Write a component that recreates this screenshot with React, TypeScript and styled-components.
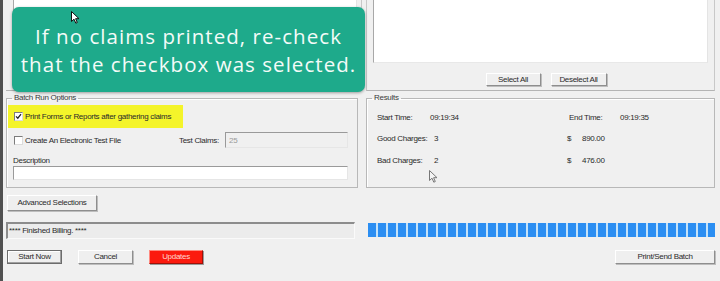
import React from "react";
import styled, { createGlobalStyle } from "styled-components";

const GlobalStyle = createGlobalStyle`
  html, body {
    margin: 0;
    padding: 0;
    background: #f0f0f0;
  }
  body {
    font-family: "Liberation Sans", Arial, sans-serif;
  }
`;

const Window = styled.div`
  position: relative;
  width: 720px;
  height: 281px;
  overflow: hidden;
  box-sizing: border-box;
  background: #f0f0f0;
  border-left: 3px solid #505050;
  padding: 0 5px 0 3px;
  display: grid;
  grid-template-columns: 352px 349px;
  grid-template-rows: 92px 96px 23px 28px auto;
  column-gap: 8px;
  font-family: "Liberation Sans", Arial, sans-serif;
  font-size: 8px;
  letter-spacing: -0.3px;
  color: #2a2a2a;
`;

const Frame = styled.div<{ $left?: boolean }>`
  box-sizing: border-box;
  height: 91px;
  border-bottom: 1px solid #b4b4b4;
  border-left: ${({ $left }) => ($left ? "none" : "1px solid #c8c8c8")};
  border-right: 1px solid #c8c8c8;
  margin-right: ${({ $left }) => ($left ? "-4px" : "0")};
  padding: ${({ $left }) => ($left ? "0 4px 0 7px" : "0 6px")};
  display: flex;
  flex-direction: column;
`;

const List = styled.div`
  height: 63px;
  background: #fff;
  border-left: 1px solid #a8a8a8;
  border-right: 1px solid #e4e4e4;
  border-bottom: 1px solid #e8e8e8;
  box-sizing: border-box;
`;

const ListButtons = styled.div`
  display: flex;
  justify-content: center;
  gap: 10px;
  padding-left: 11px;
  margin-top: 10px;
`;

const Button = styled.button<{ $w: number; $h?: number; $kind?: "default" | "danger" }>`
  box-sizing: border-box;
  width: ${({ $w }) => $w}px;
  height: ${({ $h }) => $h ?? 14}px;
  padding: 0;
  font-family: inherit;
  font-size: 8px;
  letter-spacing: -0.3px;
  line-height: 1;
  color: ${({ $kind }) => ($kind === "danger" ? "#ffd6d0" : "#2a2a2a")};
  background: ${({ $kind }) => ($kind === "danger" ? "#fb1a0e" : "#efefef")};
  border: 1px solid;
  border-color: ${({ $kind }) =>
    $kind === "default"
      ? "#6c6c6c"
      : $kind === "danger"
      ? "#ff8a80 #a01008 #a01008 #ff8a80"
      : "#ffffff #8e8e8e #8e8e8e #ffffff"};
  box-shadow: ${({ $kind }) =>
    $kind === "default"
      ? "inset -1px -1px 0 #a0a0a0, inset 1px 1px 0 #fff"
      : $kind === "danger"
      ? "1px 1px 0 #9a9a9a"
      : "1px 1px 0 #bdbdbd"};
  cursor: default;
`;

const GroupBox = styled.fieldset`
  box-sizing: border-box;
  margin: 1px 0 0;
  height: 95px;
  padding: 0;
  border: 1px solid #b8b8b8;
  box-shadow: inset 1px 1px 0 #fff;
  min-width: 0;
`;

const Legend = styled.legend`
  margin-left: 5px;
  padding: 0 2px;
  line-height: 10px;
  font-size: 8px;
  color: #3a3a3a;
`;

const Highlight = styled.div`
  margin: 2px 0 0 1px;
  width: 175px;
  height: 23px;
  background: #f4f42a;
  display: flex;
  align-items: center;
  padding-left: 6px;
  box-sizing: border-box;
  gap: 2px;
`;

const Box = styled.span`
  box-sizing: border-box;
  width: 9px;
  height: 9px;
  background: #fff;
  border: 1px solid;
  border-color: #7c7c7c #dcdcdc #dcdcdc #7c7c7c;
  display: inline-flex;
  align-items: center;
  justify-content: center;
  flex: none;
`;

const OptionRow = styled.div`
  display: grid;
  grid-template-columns: 165px 46px 123px;
  align-items: center;
  margin-top: 4px;
  height: 16px;
  padding-left: 7px;
`;

const CheckLabel = styled.label`
  display: flex;
  align-items: center;
  gap: 2px;
`;

const Field = styled.div<{ $disabled?: boolean }>`
  box-sizing: border-box;
  height: ${({ $disabled }) => ($disabled ? 16 : 14)}px;
  background: ${({ $disabled }) => ($disabled ? "#f0f0f0" : "#fff")};
  border: 1px solid;
  border-color: #9a9a9a #e6e6e6 #e6e6e6 #9a9a9a;
  color: #9a9a9a;
  padding: 3px 3px 0;
  font-size: 8px;
`;

const Caption = styled.div`
  margin: 8px 0 0 6px;
  line-height: 10px;
`;

const DescField = styled(Field)`
  margin-left: 6px;
  width: 335px;
`;

const Results = styled.div`
  display: grid;
  grid-template-rows: repeat(3, 12px);
  row-gap: 9.5px;
  margin-top: 8px;
  padding-left: 10px;
`;

const ResultRow = styled.div`
  display: flex;
  align-items: center;
`;

const Cell = styled.span<{ $w: number }>`
  width: ${({ $w }) => $w}px;
  flex: none;
`;

const Cell2 = styled.span`
  flex: none;
`;

const BottomLeft = styled.div`
  display: flex;
  align-items: flex-start;
  gap: 16px;
  padding-left: 1px;
  margin-top: 11px;
`;

const BottomRight = styled.div`
  display: flex;
  justify-content: flex-end;
  margin-top: 11px;
`;

const AdvRow = styled.div`
  align-self: end;
  padding-left: 1px;
`;

const Status = styled.div`
  align-self: end;
  box-sizing: border-box;
  width: 349px;
  height: 17px;
  background: #ececec;
  border-top: 2px solid #8c8c8c;
  border-left: 2px solid #8c8c8c;
  border-right: 1px solid #fafafa;
  border-bottom: 1px solid #fafafa;
  padding: 2px 0 0 1px;
  line-height: 10px;
`;

const Progress = styled.div`
  align-self: end;
  margin: 0 0 2px 2px;
  width: 347px;
  height: 14px;
  background: #c4e3fa;
  display: flex;
  gap: 2px;
  overflow: hidden;
`;

const Segment = styled.span`
  width: 8px;
  flex: none;
  background: #2b8ef2;
`;

const Callout = styled.div`
  position: absolute;
  left: 9px;
  top: 7px;
  width: 353px;
  height: 85px;
  box-sizing: border-box;
  border-radius: 7px;
  background: #1eaa8b;
  box-shadow: 0 1px 3px rgba(0, 0, 0, 0.35);
  color: #f4fbf8;
  display: flex;
  flex-direction: column;
  justify-content: center;
`;

const CalloutText = styled.p`
  margin: 0;
  font-family: "Open Sans", "Liberation Sans", sans-serif;
  font-weight: 500;
  font-size: 20.5px;
  line-height: 28px;
  letter-spacing: 1.05px;
  text-align: center;
`;

const Pointer = styled.svg<{ $x: number; $y: number }>`
  position: absolute;
  left: ${({ $x }) => $x}px;
  top: ${({ $y }) => $y}px;
`;

const Tick = () => (
  <svg width="7" height="7" viewBox="0 0 7 7">
    <path d="M1 3.4 L2.8 5.2 L6 1.2" fill="none" stroke="#222" strokeWidth="1.3" />
  </svg>
);

const Arrow = ({ x, y, hollow }: { x: number; y: number; hollow?: boolean }) => (
  <Pointer $x={x} $y={y} width="9" height="13" viewBox="0 0 9 13">
    <path
      d="M0.5 0.5 L0.5 10.5 L3 8.2 L4.8 12.2 L6.3 11.5 L4.6 7.7 L8 7.7 Z"
      fill={hollow ? "#f4f4f4" : "#fff"}
      stroke={hollow ? "#777" : "#111"}
      strokeWidth="1"
      strokeLinejoin="round"
    />
  </Pointer>
);

export default function App() {
  const segments = Array.from({ length: 35 });
  return (
    <>
      <GlobalStyle />
      <Window>
        <Frame $left>
          <List />
        </Frame>
        <Frame>
          <List />
          <ListButtons>
            <Button $w={55} $h={13}>Select All</Button>
            <Button $w={56} $h={13}>Deselect All</Button>
          </ListButtons>
        </Frame>

        <GroupBox>
          <Legend>Batch Run Options</Legend>
          <Highlight>
            <Box>
              <Tick />
            </Box>
            <span>Print Forms or Reports after gathering claims</span>
          </Highlight>
          <OptionRow>
            <CheckLabel>
              <Box />
              <span>Create An Electronic Test File</span>
            </CheckLabel>
            <span>Test Claims:</span>
            <Field $disabled>25</Field>
          </OptionRow>
          <Caption>Description</Caption>
          <DescField />
        </GroupBox>
        <GroupBox>
          <Legend>Results</Legend>
          <Results>
            <ResultRow>
              <Cell $w={53}>Start Time:</Cell>
              <Cell $w={139}>09:19:34</Cell>
              <Cell $w={51}>End Time:</Cell>
              <Cell2>09:19:35</Cell2>
            </ResultRow>
            <ResultRow>
              <Cell $w={57}>Good Charges:</Cell>
              <Cell $w={133}>3</Cell>
              <Cell $w={15}>$</Cell>
              <Cell2>890.00</Cell2>
            </ResultRow>
            <ResultRow>
              <Cell $w={57}>Bad Charges:</Cell>
              <Cell $w={133}>2</Cell>
              <Cell $w={15}>$</Cell>
              <Cell2>476.00</Cell2>
            </ResultRow>
          </Results>
        </GroupBox>

        <AdvRow>
          <Button $w={90} $h={16}>Advanced Selections</Button>
        </AdvRow>
        <div />

        <Status>**** Finished Billing. ****</Status>
        <Progress>
          {segments.map((_, i) => (
            <Segment key={i} />
          ))}
        </Progress>

        <BottomLeft>
          <Button $w={55} $kind="default">Start Now</Button>
          <Button $w={55}>Cancel</Button>
          <Button $w={54} $kind="danger">Updates</Button>
        </BottomLeft>
        <BottomRight>
          <Button $w={100}>Print/Send Batch</Button>
        </BottomRight>

        <Callout>
          <CalloutText>
            If no claims printed, re-check
            <br />
            that the checkbox was selected.
          </CalloutText>
        </Callout>
        <Arrow x={68} y={11} />
        <Arrow x={426} y={170} hollow />
      </Window>
    </>
  );
}
